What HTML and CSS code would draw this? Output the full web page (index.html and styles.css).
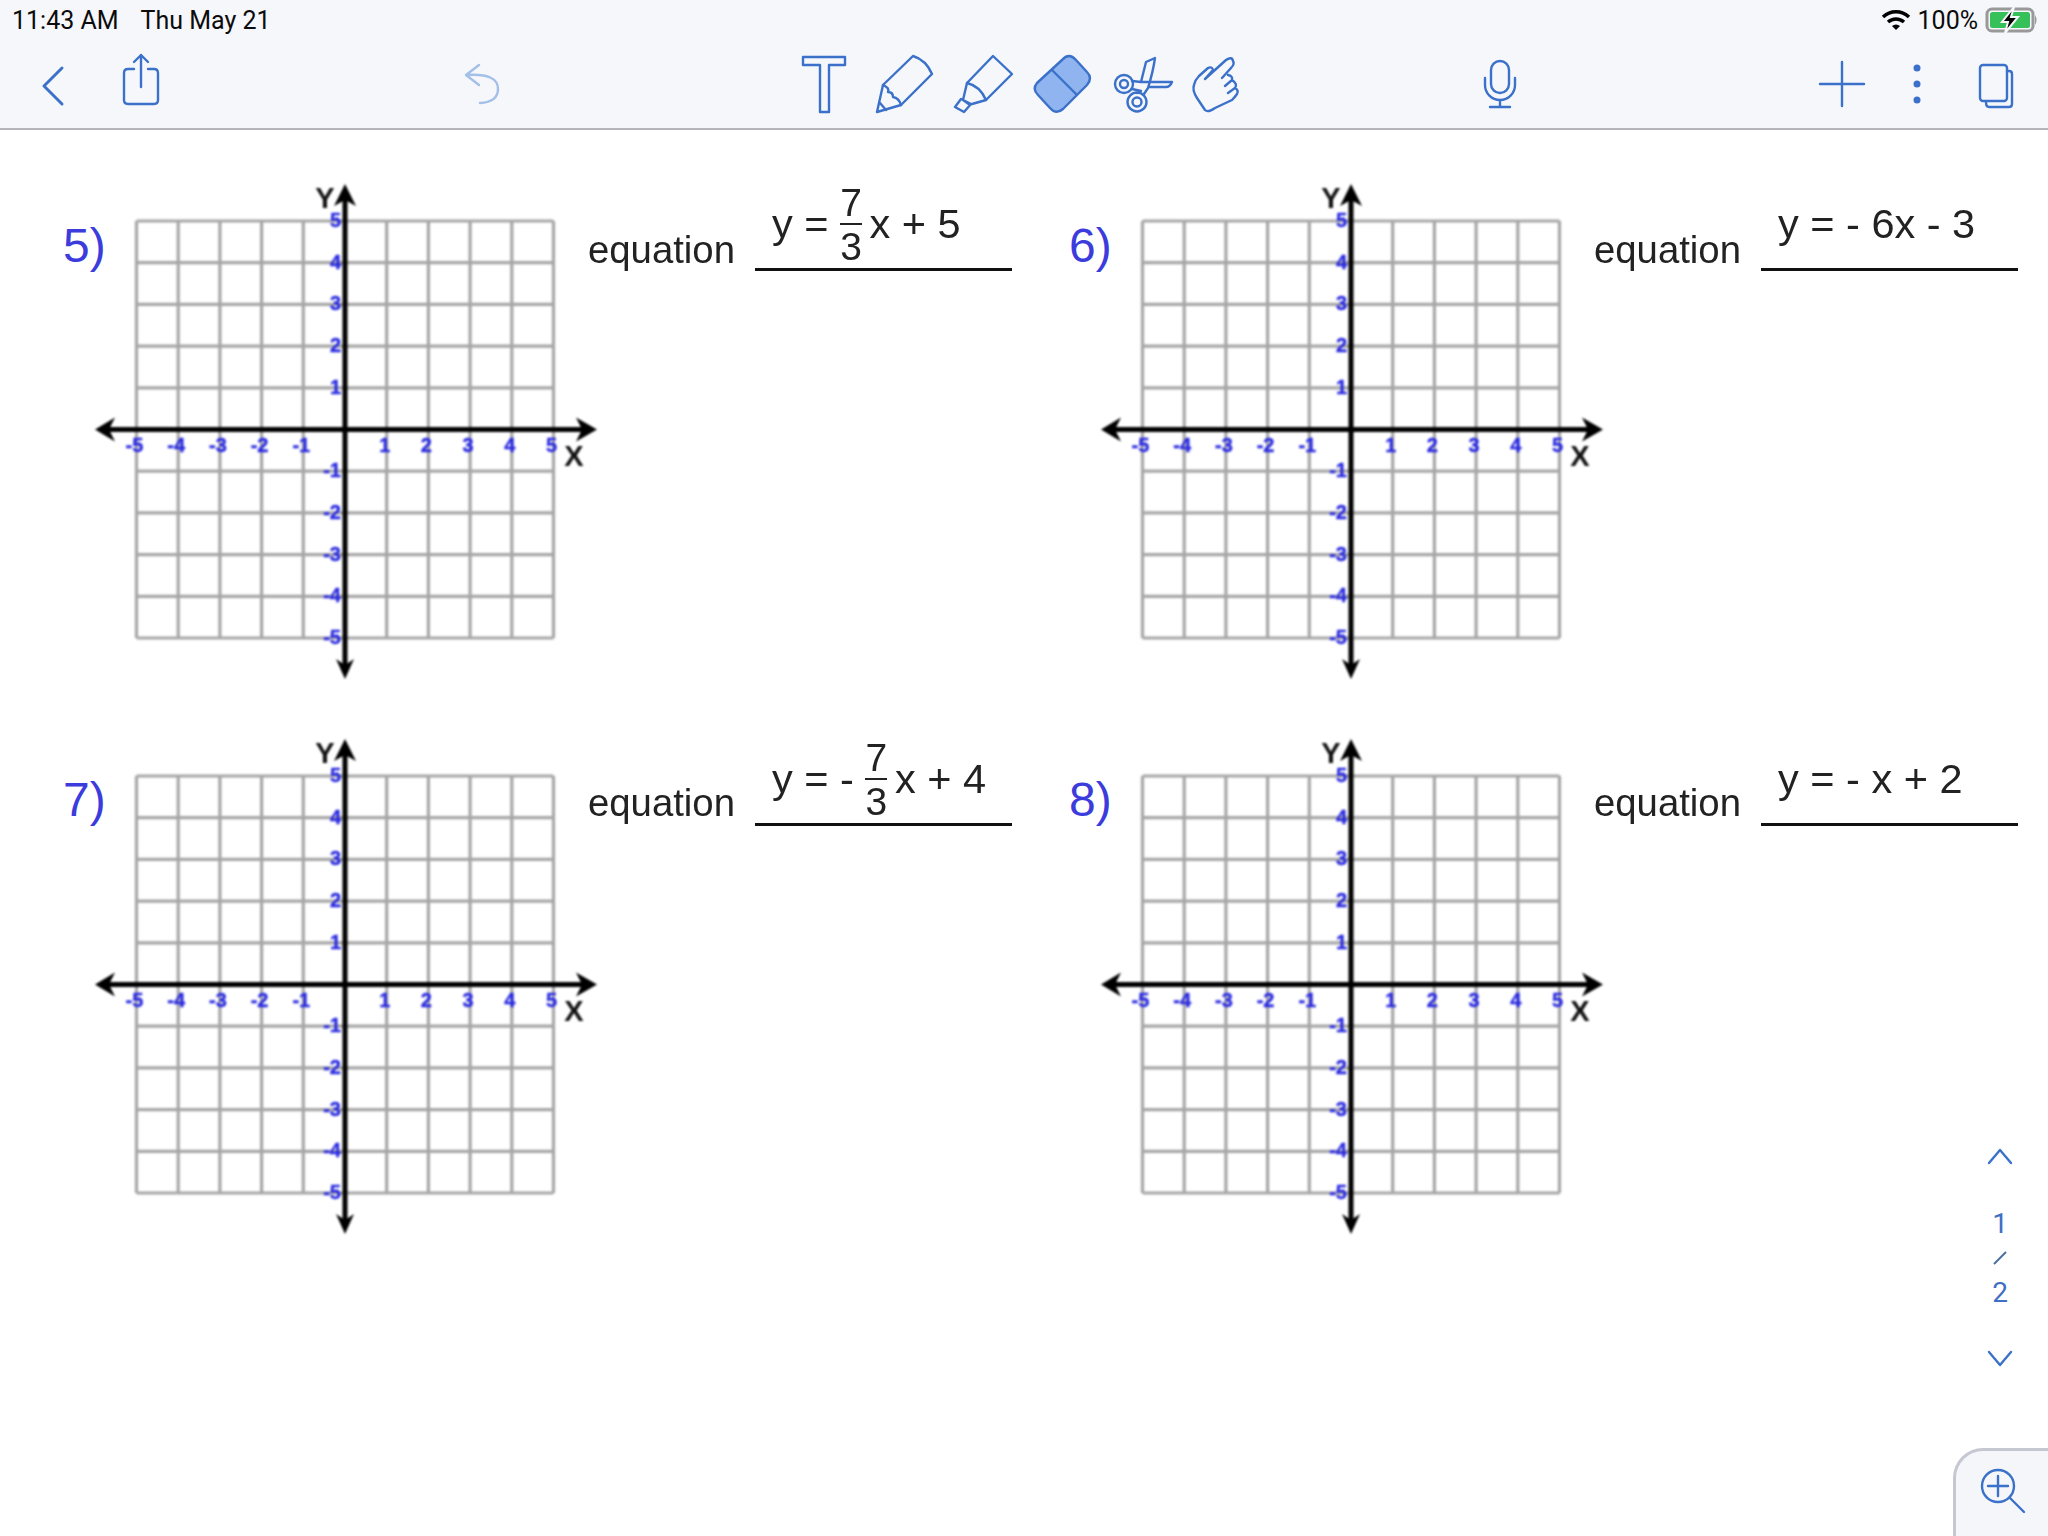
FILE: index.html
```html
<!DOCTYPE html>
<html>
<head>
  <title>Graphing worksheet</title>
  <link rel="stylesheet" href="styles.css">
</head>
<body>
  <header class="app-bar">
    <div class="status-bar">
      <div class="status-time"><span>11:43 AM</span><span>Thu May 21</span></div>
      <div class="status-right">
        <svg class="wifi" width="30" height="24" viewBox="1881 8 30 24">
          <path d="M1883 17 A19 19 0 0 1 1909 17" />
          <path d="M1888 22 A12 12 0 0 1 1904 22" />
          <path class="wifi-dot" d="M1892 26 A6 6 0 0 1 1900 26 L1896 30Z" />
        </svg>
        <span class="battery-text">100%</span>
        <svg class="battery" width="54" height="28" viewBox="1985 6 54 28">
          <rect class="battery-shell" x="1987" y="9" width="46" height="22" rx="5" />
          <rect class="battery-fill" x="1990" y="12" width="40" height="16" rx="2.5" />
          <path class="battery-nub" d="M2035 15 Q2038 20 2035 25Z" />
          <path class="battery-bolt" d="M2014 7 L2002 22 H2008 L2005 33 L2018 17 H2011Z" />
        </svg>
      </div>
    </div>
    <nav class="toolbar">
      <svg class="icon" width="30" height="72" viewBox="38 48 30 72"><path class="thick" d="M62 68 L44 86 L62 104" /></svg>
      <svg class="icon share" width="46" height="72" viewBox="118 48 46 72">
        <path d="M134 69 H128 Q124 69 124 73 V100 Q124 104 128 104 H154 Q158 104 158 100 V73 Q158 69 154 69 H148" />
        <path d="M141 87 V55 M134 62 L141 55 L148 62" />
      </svg>
      <svg class="icon undo" width="44" height="72" viewBox="460 48 44 72">
        <path d="M479 65 L466 75 L479 85 M467 75 Q498 73 498 89 Q498 102 480 103" />
      </svg>
      <div class="tool-group">
        <svg class="icon" width="66" height="72" viewBox="798 48 66 72"><path d="M803 57 H845 V65 H829 V112 H820 V65 H803Z" /></svg>
        <svg class="icon" width="81" height="72" viewBox="864 48 81 72">
          <path d="M877 112 L883 85 L913 56 Q926 60 932 74 L901 105Z" />
          <path d="M883 85 Q890 88 888 92 Q893 92 893 97 Q899 98 901 105 M880 103 L886 110" />
        </svg>
        <svg class="icon" width="79" height="72" viewBox="945 48 79 72">
          <path d="M967 83 L993 56 L1012 74 L986 100 Q980 86 967 83Z" />
          <path d="M967 83 L963 100 L970 105 L972 104 L986 100 M961 99 L955 107 L964 112 L971 104Z" />
        </svg>
        <svg class="icon" width="87" height="72" viewBox="1024 48 87 72">
          <path class="eraser" d="M1062 60 Q1069 52 1076 60 L1087 72 Q1093 78 1087 85 L1063 109 Q1056 115 1050 108 L1038 95 Q1032 89 1037 83Z" />
          <path d="M1052 70 L1076 94" />
        </svg>
        <svg class="icon" width="76" height="72" viewBox="1111 48 76 72">
          <circle cx="1124" cy="84" r="9" />
          <circle cx="1124" cy="84" r="4" />
          <circle cx="1137" cy="102" r="9.5" />
          <circle cx="1137" cy="102" r="4.5" />
          <path d="M1155 58 L1146 62 L1141 82 L1132 81 M1155 58 Q1153 72 1148 88 L1144 94 M1142 82 H1172 Q1170 87 1166 87 H1149 M1132 89 L1141 91 L1137 93" />
        </svg>
        <svg class="icon" width="56" height="72" viewBox="1187 48 56 72">
          <path d="M1205 79 L1226 60 Q1232 56 1233 61 Q1235 64 1231 68 L1222 78 M1228 75 Q1233 76 1232 80 L1225 86 M1232 80 Q1238 84 1235 88 L1228 93 M1235 88 Q1239 90 1237 94 Q1235 97 1232 100 L1215 108 Q1208 113 1205 110 L1197 98 Q1192 90 1194 85 Q1195 80 1199 76 L1208 68 Q1212 66 1213 70 L1205 79" />
        </svg>
      </div>
      <svg class="icon mic" width="44" height="72" viewBox="1478 48 44 72">
        <rect x="1491" y="61" width="18" height="32" rx="9" />
        <path d="M1485 78 V85 A15 15 0 0 0 1515 85 V78 M1500 100 V107 M1490 107 H1510" />
      </svg>
      <div class="tool-group tool-right">
        <svg class="icon" width="71" height="72" viewBox="1816 48 71 72"><path d="M1842 62 V106 M1820 84 H1864" /></svg>
        <svg class="icon" width="60" height="72" viewBox="1887 48 60 72">
          <circle class="dot" cx="1917" cy="68" r="3.5" />
          <circle class="dot" cx="1917" cy="84" r="3.5" />
          <circle class="dot" cx="1917" cy="100" r="3.5" />
        </svg>
        <svg class="icon" width="69" height="72" viewBox="1947 48 69 72">
          <rect x="1980" y="65" width="27" height="36" rx="3" />
          <path d="M2007 71 H2009 Q2012 71 2012 74 V104 Q2012 107 2009 107 H1989 Q1986 107 1986 102" />
        </svg>
      </div>
    </nav>
  </header>

  <main class="sheet">
    <section class="problem">
      <div class="num">5)</div>
      <svg class="graph" width="479" height="510"></svg>
      <div class="equation">
        <span class="eq-label">equation</span>
        <div class="answer"><span>y = </span><span class="frac"><span class="frac-top">7</span><span>3</span></span><span> x + 5</span></div>
      </div>
    </section>
    <section class="problem">
      <div class="num">6)</div>
      <svg class="graph" width="479" height="510"></svg>
      <div class="equation">
        <span class="eq-label">equation</span>
        <div class="answer"><span>y = - 6x - 3</span></div>
      </div>
    </section>
    <section class="problem problem-low">
      <div class="num">7)</div>
      <svg class="graph" width="479" height="510"></svg>
      <div class="equation">
        <span class="eq-label">equation</span>
        <div class="answer"><span>y = - </span><span class="frac"><span class="frac-top">7</span><span>3</span></span><span> x + 4</span></div>
      </div>
    </section>
    <section class="problem problem-low">
      <div class="num">8)</div>
      <svg class="graph" width="479" height="510"></svg>
      <div class="equation">
        <span class="eq-label">equation</span>
        <div class="answer"><span>y = - x + 2</span></div>
      </div>
    </section>
  </main>

  <aside class="pager">
    <svg class="icon" width="28" height="20" viewBox="0 0 28 20"><path d="M3 17 L14 4 L25 17" /></svg>
    <span class="page-num page-first">1</span>
    <svg class="page-slash" width="14" height="14" viewBox="0 0 14 14"><path d="M1 13 L13 1" /></svg>
    <span class="page-num">2</span>
    <svg class="icon page-next" width="28" height="20" viewBox="0 0 28 20"><path d="M3 3 L14 16 L25 3" /></svg>
  </aside>

  <div class="zoom-tab">
    <svg class="icon" width="50" height="50" viewBox="0 0 50 50">
      <circle cx="20" cy="20" r="16" />
      <path d="M20 10 V30 M10 20 H30 M32 32 L46 46" />
    </svg>
  </div>

  <script src="graph.js"></script>
</body>
</html>
```
FILE: styles.css
```css
body {
  margin: 0;
  height: 1536px;
  overflow: hidden;
  background: #fff;
  color: #222;
  font-family: "Liberation Sans", Arial, sans-serif;
  position: relative;
}
.app-bar {
  height: 128px;
  background: #f5f7fb;
  border-bottom: 2px solid #b4b5b9;
  box-sizing: content-box;
}
.status-bar {
  height: 40px;
  display: flex;
  justify-content: space-between;
  align-items: center;
  padding: 0 9px 0 12px;
  font-family: Roboto, sans-serif;
  font-size: 25px;
  color: #0c0c0c;
}
.status-time span + span {
  margin-left: 22px;
}
.status-right {
  display: flex;
  align-items: center;
  gap: 7px;
}
.wifi path {
  fill: none;
  stroke: #000;
  stroke-width: 3.5;
}
.wifi .wifi-dot {
  fill: #000;
  stroke: none;
}
.battery-shell {
  fill: none;
  stroke: #999;
  stroke-width: 3;
}
.battery-fill {
  fill: #35c05a;
}
.battery-nub {
  fill: #999;
}
.battery-bolt {
  fill: #000;
  stroke: #f5f7fb;
  stroke-width: 2;
}
.toolbar {
  height: 88px;
  display: flex;
  align-items: center;
  padding: 0 32px 0 38px;
}
.icon {
  flex: none;
  fill: none;
  stroke: #3b71c9;
  stroke-width: 2.4;
  stroke-linecap: round;
  stroke-linejoin: round;
}
.icon .thick {
  stroke-width: 3;
}
.icon .dot {
  fill: #3b71c9;
  stroke: none;
}
.icon .eraser {
  fill: #8fb4ef;
}
.share {
  margin-left: 50px;
}
.undo {
  margin-left: 296px;
  stroke: #a4c0e8;
}
.tool-group {
  display: flex;
  margin-left: 294px;
}
.mic {
  margin-left: 235px;
}
.tool-right {
  margin-left: auto;
}
.sheet {
  display: grid;
  grid-template-columns: 1006px 1fr;
  grid-auto-rows: 555px;
}
.problem {
  display: flex;
  align-items: flex-start;
  padding: 51px 0 0 63px;
}
.num {
  flex: none;
  width: 46px;
  margin-top: 37px;
  font-size: 48px;
  line-height: 56px;
  color: #3c3cdd;
}
.problem-low .num {
  margin-top: 36px;
}
.graph {
  flex: none;
  overflow: visible;
  filter: blur(0.8px);
  font-family: "Liberation Sans", Arial, sans-serif;
}
.grid-line {
  stroke: #a6a6a6;
  stroke-width: 3.2;
}
.axis {
  stroke: #000;
  stroke-width: 5;
}
.arrow {
  fill: #000;
}
.tick {
  fill: #2a2ae0;
  stroke: #2a2ae0;
  stroke-width: 0.4;
  font-size: 20px;
  font-weight: 700;
}
.axis-name {
  fill: #111;
  font-size: 29px;
  font-weight: 700;
}
.equation {
  flex: none;
  display: flex;
  align-items: flex-end;
  height: 90px;
  font-size: 41.5px;
  line-height: 42px;
  filter: blur(0.5px);
}
.eq-label {
  width: 167px;
  font-size: 38.3px;
}
.problem-low .eq-label {
  margin-bottom: 2px;
}
.answer {
  display: flex;
  align-items: flex-end;
  box-sizing: border-box;
  width: 257px;
  padding: 0 0 23px 17px;
  border-bottom: 3px solid #111;
  white-space: pre;
}
.frac {
  display: flex;
  flex-direction: column;
  align-items: center;
  width: 22px;
  margin: 0 -4px -17px 0;
  font-size: 39px;
  line-height: 30px;
}
.frac-top {
  width: 100%;
  text-align: center;
  padding-bottom: 5px;
  margin-bottom: 7px;
  border-bottom: 2px solid #222;
}
.pager {
  position: absolute;
  left: 1986px;
  top: 1146px;
  width: 28px;
  display: flex;
  flex-direction: column;
  align-items: center;
  color: #3f6fc4;
}
.page-num {
  font-family: Roboto, sans-serif;
  font-size: 28px;
  line-height: 32px;
}
.page-first {
  margin-top: 42px;
}
.page-slash {
  margin: 11px 0 12px;
  fill: none;
  stroke: #4b6f9f;
  stroke-width: 2;
}
.page-next {
  margin-top: 40px;
}
.zoom-tab {
  position: absolute;
  left: 1953px;
  top: 1448px;
  width: 95px;
  height: 88px;
  box-sizing: border-box;
  padding: 15px 0 0 22px;
  background: #f4f6fa;
  border: 3px solid #c5c8d0;
  border-width: 3px 0 0 3px;
  border-top-left-radius: 30px;
}
```
FILE: graph.js
```js
// the four graphs are identical, so build them in a loop
const NS = 'http://www.w3.org/2000/svg';
const STEP = 41.7;
const LEFT = 27.5;
const TOP = 40;
const MID_X = LEFT + STEP * 5;
const MID_Y = TOP + STEP * 5;

function add(svg, tag, attrs, text) {
  const el = document.createElementNS(NS, tag);
  for (const key in attrs) el.setAttribute(key, attrs[key]);
  if (text !== undefined) el.textContent = text;
  svg.appendChild(el);
  return el;
}

function drawGraph(svg) {
  // grid
  for (let i = 0; i <= 10; i++) {
    const p = STEP * i;
    add(svg, 'line', { class: 'grid-line', x1: LEFT + p, y1: TOP, x2: LEFT + p, y2: TOP + STEP * 10 });
    add(svg, 'line', { class: 'grid-line', x1: LEFT, y1: TOP + p, x2: LEFT + STEP * 10, y2: TOP + p });
  }

  // axes with arrow heads
  add(svg, 'line', { class: 'axis', x1: -8, y1: MID_Y, x2: 480, y2: MID_Y });
  add(svg, 'line', { class: 'axis', x1: MID_X, y1: 16, x2: MID_X, y2: 490 });
  add(svg, 'path', { class: 'arrow', d: `M-14 ${MID_Y} L6 ${MID_Y - 12} L0 ${MID_Y} L6 ${MID_Y + 12}Z` });
  add(svg, 'path', { class: 'arrow', d: `M488 ${MID_Y} L467 ${MID_Y - 12} L473 ${MID_Y} L467 ${MID_Y + 12}Z` });
  add(svg, 'path', { class: 'arrow', d: `M${MID_X} 3 L${MID_X + 11} 25 L${MID_X} 19 L${MID_X - 11} 25Z` });
  add(svg, 'path', { class: 'arrow', d: `M${MID_X} 498 L${MID_X + 9} 478 L${MID_X} 484 L${MID_X - 9} 478Z` });

  // tick numbers
  for (let n = -5; n <= 5; n++) {
    if (n === 0) continue;
    add(svg, 'text', { class: 'tick', x: MID_X + n * STEP - 2, y: MID_Y + 22, 'text-anchor': 'middle' }, n);
    add(svg, 'text', { class: 'tick', x: MID_X - 4, y: MID_Y - n * STEP + 6, 'text-anchor': 'end' }, n);
  }

  add(svg, 'text', { class: 'axis-name', x: 216, y: 27, 'text-anchor': 'middle' }, 'Y');
  add(svg, 'text', { class: 'axis-name', x: 465, y: 285, 'text-anchor': 'middle' }, 'X');
}

document.querySelectorAll('.graph').forEach(drawGraph);
```
